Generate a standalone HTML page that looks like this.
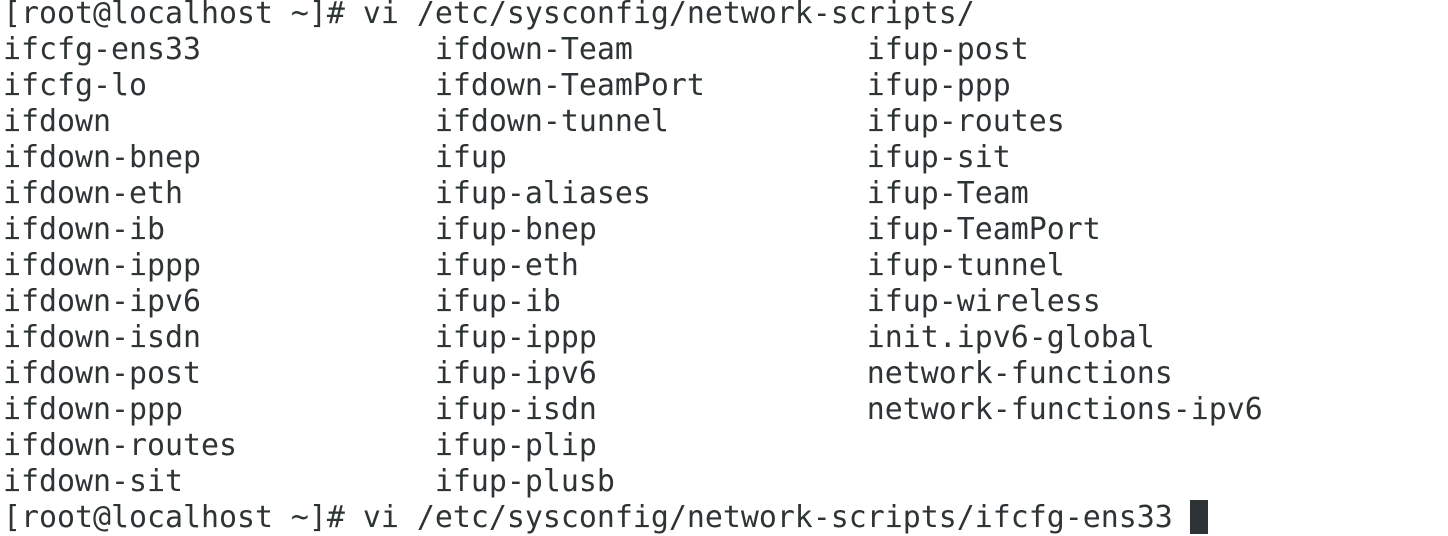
<!DOCTYPE html>
<html><head><style>
html,body{margin:0;padding:0;background:#fff;width:1448px;height:534px;overflow:hidden}
pre{position:absolute;left:3px;top:-4px;margin:0;font-family:"DejaVu Sans Mono","Liberation Mono",monospace;font-size:29.9px;line-height:36px;color:#2e3436;white-space:pre}
.cur{position:absolute;left:1190px;top:500px;width:18px;height:34px;background:#2e3436}
</style></head><body>
<pre>[root@localhost ~]# vi /etc/sysconfig/network-scripts/
ifcfg-ens33             ifdown-Team             ifup-post
ifcfg-lo                ifdown-TeamPort         ifup-ppp
ifdown                  ifdown-tunnel           ifup-routes
ifdown-bnep             ifup                    ifup-sit
ifdown-eth              ifup-aliases            ifup-Team
ifdown-ib               ifup-bnep               ifup-TeamPort
ifdown-ippp             ifup-eth                ifup-tunnel
ifdown-ipv6             ifup-ib                 ifup-wireless
ifdown-isdn             ifup-ippp               init.ipv6-global
ifdown-post             ifup-ipv6               network-functions
ifdown-ppp              ifup-isdn               network-functions-ipv6
ifdown-routes           ifup-plip
ifdown-sit              ifup-plusb
[root@localhost ~]# vi /etc/sysconfig/network-scripts/ifcfg-ens33 </pre>
<div class="cur"></div>
</body></html>
